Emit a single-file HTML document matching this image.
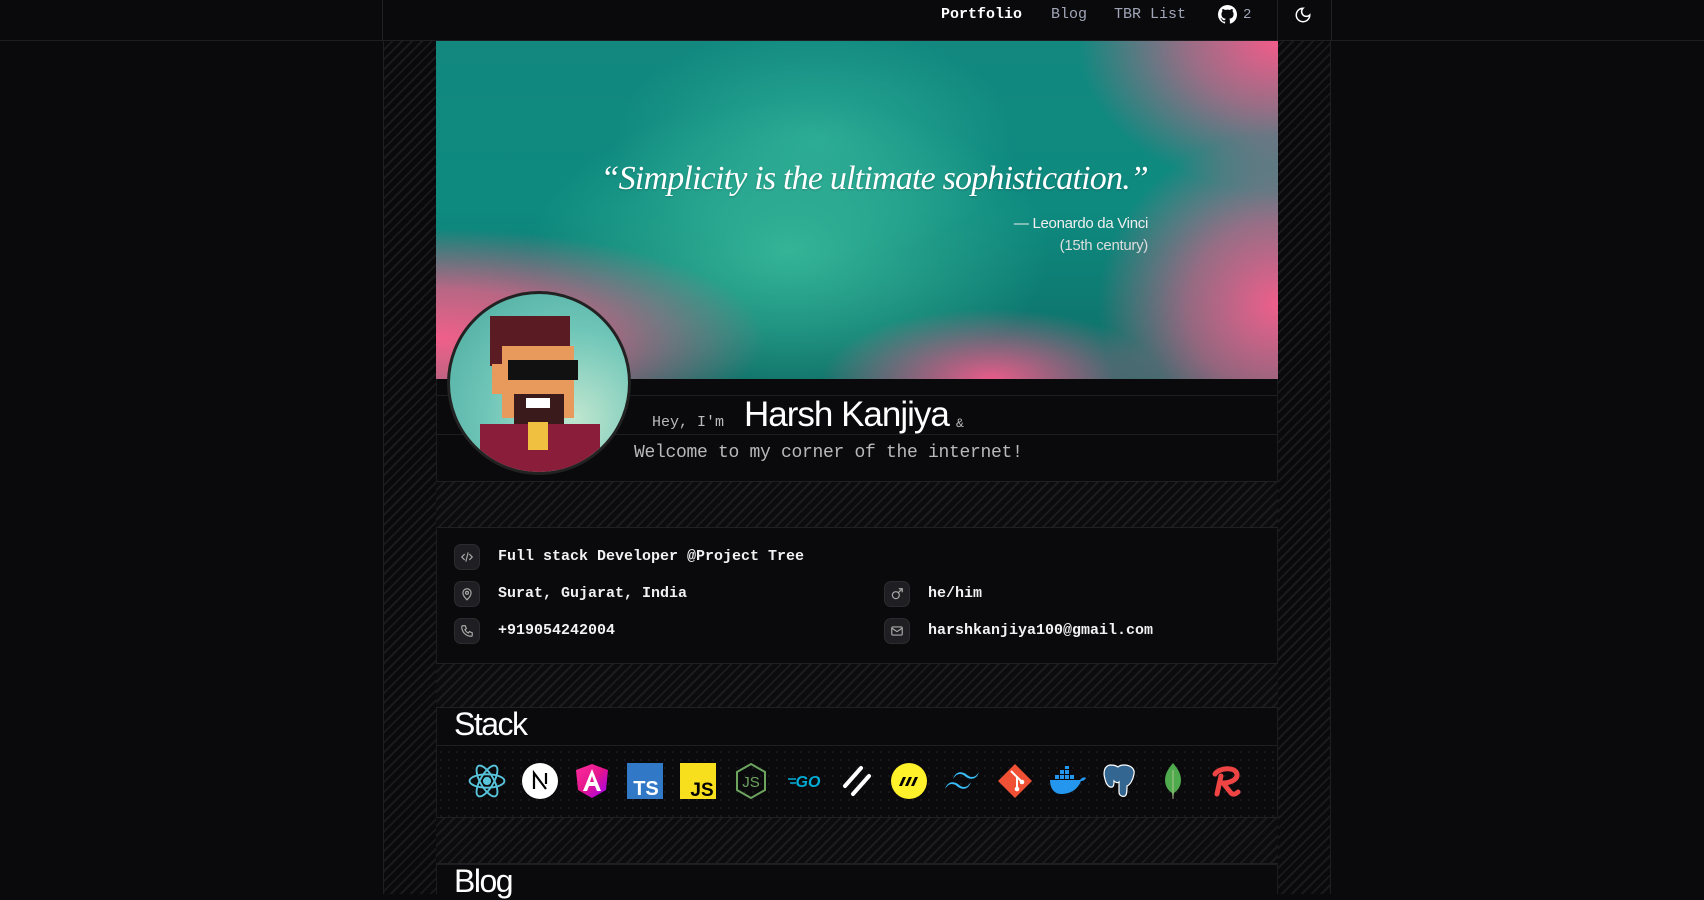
<!DOCTYPE html>
<html><head><meta charset="utf-8"><style>
*{margin:0;padding:0;box-sizing:border-box}
body{width:1704px;height:894px;overflow:hidden;background:#0a0a0c;font-family:"Liberation Mono",monospace;color:#e8e8e8;position:relative}
.nav{position:absolute;left:0;top:0;width:1704px;height:41px;border-bottom:1px solid #1e1e22}
.nav .edgeL{position:absolute;left:382px;top:0;height:41px;border-left:1px solid #222}
.nav .edgeR{position:absolute;left:1331px;top:0;height:41px;border-left:1px solid #222}
.nav span{position:absolute;top:6px;font-size:15px}
.col{position:absolute;left:383px;top:41px;width:948px;height:853px;border-left:1px solid #1e1e22;border-right:1px solid #1e1e22;background:repeating-linear-gradient(135deg,#0a0a0c 0 5px,#1a1a1d 5px 7px)}
.inner{position:absolute;left:436px;width:842px;background:#0a0a0c;border-left:1px solid #1c1c20;border-right:1px solid #1c1c20}
.hatch{position:absolute;left:436px;width:842px;background:repeating-linear-gradient(135deg,#0c0c0e 0 5px,#1c1c20 5px 7px);border-top:1px solid #202024;border-bottom:1px solid #202024}
.banner{position:absolute;left:436px;top:41px;width:842px;height:338px;overflow:hidden;background:
radial-gradient(ellipse 200px 150px at 100% 0%,#f25c8a 0%,rgba(242,92,138,0.6) 45%,rgba(242,92,138,0) 100%),
radial-gradient(ellipse 330px 110px at 0% 88%,#f0608a 0%,rgba(240,96,138,0.75) 45%,rgba(240,96,138,0) 100%),
radial-gradient(ellipse 180px 170px at 100% 78%,#ee5f8c 0%,rgba(238,95,140,0.6) 50%,rgba(238,95,140,0) 100%),
radial-gradient(ellipse 170px 70px at 66% 100%,#e85c8a 0%,rgba(232,92,138,0) 100%),
radial-gradient(ellipse 260px 150px at 42% 62%,#35b497 0%,rgba(53,180,151,0) 100%),
radial-gradient(ellipse 200px 120px at 45% 30%,#2aa994 0%,rgba(42,169,148,0) 100%),
linear-gradient(180deg,#12887f 0%,#0e8a7f 50%,#0e6d66 100%)}
.q{position:absolute;left:0;width:712px;text-align:right;font-family:"Liberation Serif",serif;font-style:italic;color:#fff}
.row{position:absolute;font-size:15px;color:#f2f2f2;font-weight:bold}
.ic{position:absolute;width:26px;height:26px;border-radius:7px;background:#1f1f23;border:1px solid #2c2c30;display:flex;align-items:center;justify-content:center}
.st{position:absolute;top:761px;width:40px;height:40px;display:flex;align-items:center;justify-content:center}
</style></head><body>
<div class="nav"><div class="edgeL"></div><div class="edgeR"></div>
<span style="left:941px;color:#fff;font-weight:bold">Portfolio</span>
<span style="left:1051px;color:#a0a6b8">Blog</span>
<span style="left:1114px;color:#a0a6b8">TBR List</span>
<svg style="position:absolute;left:1218px;top:5px" width="19" height="19" viewBox="0 0 16 16"><path fill="#fff" d="M8 0C3.580 0 0 3.58 0 8c0 3.54 2.29 6.53 5.47 7.59.4.07.55-.17.55-.38v-1.33c-2.230.48-2.7-1.07-2.7-1.07-.36-.92-.89-1.17-.89-1.17-.73-.5.05-.49.05-.49.8.06 1.23.83 1.23.83.72 1.23 1.87.87 2.33.67.07-.52.28-.87.5-1.07-1.78-.2-3.64-.89-3.64-3.95 0-.87.31-1.59.82-2.15-.08-.2-.36-1.02.08-2.12 0 0 .67-.21 2.2.82a7.6 7.6 0 014 0c1.53-1.04 2.2-.82 2.2-.82.44 1.1.16 1.92.08 2.12.51.56.82 1.27.82 2.15 0 3.07-1.87 3.75-3.65 3.95.29.25.54.73.54 1.48v2.2c0 .21.15.46.55.38A8 8 0 0016 8c0-4.42-3.58-8-8-8z"/></svg>
<span style="left:1243px;color:#a0a6b8;font-size:14px;top:7px">2</span>
<div style="position:absolute;left:1277px;top:0;height:41px;border-left:1px solid #222"></div>
<svg style="position:absolute;left:1294px;top:6px" width="18" height="18" viewBox="0 0 24 24" fill="none" stroke="#fff" stroke-width="2"><path d="M12 3a6 6 0 009 9 9 9 0 11-9-9z"/></svg>
</div>
<div class="col"></div>
<div class="banner">
<div class="q" style="top:119px;font-size:34px;letter-spacing:-0.8px;text-shadow:0 1px 2px rgba(0,0,0,.2)">“Simplicity is the ultimate sophistication.”</div>
<div class="q" style="top:174px;font-family:'Liberation Sans',sans-serif;font-style:normal;font-size:15px;color:#eee;letter-spacing:-0.3px">— Leonardo da Vinci</div>
<div class="q" style="top:196px;font-family:'Liberation Sans',sans-serif;font-style:normal;font-size:15px;color:#ddd;letter-spacing:-0.3px">(15th century)</div>
</div>
<div class="inner" style="top:379px;height:102px">
<div style="position:absolute;left:0;right:0;top:16px;border-top:1px solid #1e1e22"></div>
<div style="position:absolute;left:0;right:0;top:55px;border-top:1px solid #1e1e22"></div>
<div style="position:absolute;left:215px;top:35px;font-size:15px;color:#bbb">Hey, I'm</div>
<div style="position:absolute;left:307px;top:16px;font-family:'Liberation Sans',sans-serif;font-size:35px;color:#fff;letter-spacing:-1px">Harsh Kanjiya</div>
<div style="position:absolute;left:519px;top:37px;font-size:13px;color:#bbb">&amp;</div>
<div style="position:absolute;left:197px;top:64px;font-size:18px;color:#b8b8b8;letter-spacing:-0.3px">Welcome to my corner of the internet!</div>
</div>
<div style="position:absolute;left:447px;top:291px;width:184px;height:184px;border-radius:50%;border:3px solid #222;background:radial-gradient(circle at 70% 70%,#bfe6cf,#6fc6b8 50%,#4aa89e);overflow:hidden">
<div style="position:absolute;left:40px;top:22px;width:80px;height:50px;background:#5a1c22"></div>
<div style="position:absolute;left:52px;top:52px;width:72px;height:72px;background:#e8995c"></div>
<div style="position:absolute;left:42px;top:70px;width:14px;height:30px;background:#e8995c"></div>
<div style="position:absolute;left:58px;top:66px;width:70px;height:20px;background:#111"></div>
<div style="position:absolute;left:64px;top:100px;width:50px;height:30px;background:#3a1a1a"></div>
<div style="position:absolute;left:76px;top:104px;width:24px;height:10px;background:#fff"></div>
<div style="position:absolute;left:30px;top:130px;width:120px;height:60px;background:#8a1e3a"></div>
<div style="position:absolute;left:78px;top:128px;width:20px;height:28px;background:#f0c040"></div>
</div>
<div class="hatch" style="top:481px;height:47px"></div>
<div class="inner" style="top:528px;height:135px">
<div class="ic" style="left:17px;top:16px"><svg width="14" height="14" viewBox="0 0 24 24" fill="none" stroke="#aaa" stroke-width="2"><path d="M8 7l-5 5 5 5M16 7l5 5-5 5M14 4l-4 16"/></svg></div>
<div class="row" style="left:61px;top:20px">Full stack Developer @Project Tree</div>
<div class="ic" style="left:17px;top:53px"><svg width="14" height="14" viewBox="0 0 24 24" fill="none" stroke="#aaa" stroke-width="2"><path d="M12 22s7-7 7-12a7 7 0 00-14 0c0 5 7 12 7 12z"/><circle cx="12" cy="10" r="2.5"/></svg></div>
<div class="row" style="left:61px;top:57px">Surat, Gujarat, India</div>
<div class="ic" style="left:17px;top:90px"><svg width="14" height="14" viewBox="0 0 24 24" fill="none" stroke="#aaa" stroke-width="2"><path d="M5 3h4l2 5-2.5 1.5a11 11 0 006 6L16 13l5 2v4a2 2 0 01-2 2A16 16 0 013 5a2 2 0 012-2z"/></svg></div>
<div class="row" style="left:61px;top:94px">+919054242004</div>
<div class="ic" style="left:447px;top:53px"><svg width="14" height="14" viewBox="0 0 24 24" fill="none" stroke="#aaa" stroke-width="2"><circle cx="10" cy="14" r="6"/><path d="M14 10l7-7M15 3h6v6"/></svg></div>
<div class="row" style="left:491px;top:57px">he/him</div>
<div class="ic" style="left:447px;top:90px"><svg width="14" height="14" viewBox="0 0 24 24" fill="none" stroke="#aaa" stroke-width="2"><rect x="3" y="5" width="18" height="14" rx="2"/><path d="M3 7l9 6 9-6"/></svg></div>
<div class="row" style="left:491px;top:94px">harshkanjiya100@gmail.com</div>
</div>
<div class="hatch" style="top:663px;height:45px"></div>
<div class="inner" style="top:708px;height:109px;background-image:radial-gradient(#1c1c1f 1px,transparent 1px);background-size:8px 8px">
<div style="position:absolute;left:0;right:0;top:0;height:38px;background:#0a0a0c;border-bottom:1px solid #1e1e22"></div>
<div style="position:absolute;left:17px;top:-2px;font-family:'Liberation Sans',sans-serif;font-size:32px;color:#fff;letter-spacing:-1.5px">Stack</div>
</div>
<div class="st" style="left:467px"><svg width="38" height="36" viewBox="-12 -11 24 22" fill="none" stroke="#58c4dc" stroke-width="1.2"><circle r="2" fill="#58c4dc"/><ellipse rx="11" ry="4.2"/><ellipse rx="11" ry="4.2" transform="rotate(60)"/><ellipse rx="11" ry="4.2" transform="rotate(120)"/></svg></div>
<div class="st" style="left:520px"><svg width="36" height="36" viewBox="0 0 36 36"><circle cx="18" cy="18" r="18" fill="#fff"/><path d="M12 26V10l12 16M24 10v11" stroke="#000" stroke-width="2.2" fill="none"/></svg></div>
<div class="st" style="left:572px"><svg width="38" height="38" viewBox="0 0 38 38"><defs><linearGradient id="ag" x1="0" y1="0" x2="1" y2="1"><stop offset="0" stop-color="#ff2fa0"/><stop offset=".5" stop-color="#e4148c"/><stop offset="1" stop-color="#9d00ff"/></linearGradient></defs><path d="M19 2L3 8l2 20 14 8 14-8 2-20z" fill="url(#ag)"/><path d="M19 7l-9 22h4l2-5h6l2 5h4zm-2 13l2-6 2 6z" fill="#fff"/></svg></div>
<div class="st" style="left:625px"><svg width="36" height="36" viewBox="0 0 36 36"><rect width="36" height="36" fill="#3178c6"/><text x="19" y="32" font-family="Liberation Sans" font-weight="bold" font-size="20" fill="#fff" text-anchor="middle">TS</text></svg></div>
<div class="st" style="left:678px"><svg width="36" height="36" viewBox="0 0 36 36"><rect width="36" height="36" fill="#f7df1e"/><text x="22" y="33" font-family="Liberation Sans" font-weight="bold" font-size="19" fill="#000" text-anchor="middle">JS</text></svg></div>
<div class="st" style="left:731px"><svg width="34" height="38" viewBox="0 0 34 38" fill="none" stroke="#6da55f" stroke-width="2"><path d="M17 2l14 8v18l-14 8-14-8V10z"/><text x="17" y="25" font-family="Liberation Sans" font-size="15" fill="#6da55f" stroke="none" text-anchor="middle">JS</text></svg></div>
<div class="st" style="left:784px"><svg width="36" height="20" viewBox="0 0 36 20"><text x="22" y="16" font-family="Liberation Sans" font-weight="bold" font-style="italic" font-size="16" fill="#00add8" text-anchor="middle">GO</text><path d="M2 8h8M4 12h6" stroke="#00add8" stroke-width="1.5"/></svg></div>
<div class="st" style="left:836px"><svg width="34" height="34" viewBox="0 0 34 34" stroke="#fff" stroke-width="4" stroke-linecap="round"><path d="M6 22L22 4M14 30L30 12"/></svg></div>
<div class="st" style="left:889px"><svg width="38" height="38" viewBox="0 0 38 38"><circle cx="19" cy="19" r="18" fill="#fff12a"/><path d="M9 24l4-9h3l-4 9zm6 0l4-9h3l-4 9zm6 0l4-9h3l-4 9z" fill="#000"/></svg></div>
<div class="st" style="left:942px"><svg width="38" height="24" viewBox="0 0 38 24" fill="#38bdf8"><path d="M10 10c2-6 6-8 11-6 3 1 4 4 8 4 3 0 5-2 7-5-2 6-6 8-11 6-3-1-4-4-8-4-3 0-5 2-7 5zM2 20c2-6 6-8 11-6 3 1 4 4 8 4 3 0 5-2 7-5-2 6-6 8-11 6-3-1-4-4-8-4-3 0-5 2-7 5z"/></svg></div>
<div class="st" style="left:995px"><svg width="36" height="36" viewBox="0 0 36 36"><path d="M18 1l17 17-17 17L1 18z" fill="#f05033"/><path d="M14 8l6 6v12M20 14l5 5" stroke="#fff" stroke-width="2" fill="none"/><circle cx="20" cy="26" r="2.3" fill="#fff"/><circle cx="25" cy="19" r="2.3" fill="#fff"/></svg></div>
<div class="st" style="left:1048px"><svg width="38" height="30" viewBox="0 0 38 30" fill="#2496ed"><path d="M1 14h30c2-3 5-3 6-2-1 2-3 3-5 3-3 8-10 13-20 13C5 28 1 22 1 14z"/><rect x="6" y="9" width="4" height="4"/><rect x="11" y="9" width="4" height="4"/><rect x="16" y="9" width="4" height="4"/><rect x="21" y="9" width="4" height="4"/><rect x="11" y="4" width="4" height="4"/><rect x="16" y="4" width="4" height="4"/><rect x="16" y="0" width="4" height="3"/></svg></div>
<div class="st" style="left:1100px"><svg width="36" height="38" viewBox="0 0 36 38" fill="none" stroke="#fff" stroke-width="1.2"><path d="M8 3c-6 1-7 8-5 14 1 5 4 9 7 8 2 0 2-4 2-6 2 2 4 2 5 1v10c0 4 4 5 6 4s2-6 2-10c3-1 6-6 7-12 1-5-3-9-10-9-3 0-5 1-6 2-3-2-5-2-8-2z" fill="#336791"/></svg></div>
<div class="st" style="left:1153px"><svg width="20" height="38" viewBox="0 0 20 38"><path d="M10 1c4 5 8 10 8 17 0 7-4 11-7 13l-1 6-1-6c-3-2-7-6-7-13 0-7 4-12 8-17z" fill="#4fa94d"/><path d="M10 8v29" stroke="#c9c9a0" stroke-width="0.8"/></svg></div>
<div class="st" style="left:1206px"><svg width="34" height="34" viewBox="0 0 34 34" fill="none" stroke="#ef4444" stroke-width="5" stroke-linecap="round" stroke-linejoin="round"><path d="M6 10c4-6 20-8 22 0 1 6-8 9-14 9M12 12L8 30M14 19l8 10c2 2 5 1 7-1"/></svg></div>
<div class="hatch" style="top:817px;height:47px"></div>
<div class="inner" style="top:864px;height:30px;border-top:1px solid #1e1e22">
<div style="position:absolute;left:17px;top:-2px;font-family:'Liberation Sans',sans-serif;font-size:32px;color:#fff;letter-spacing:-1.5px">Blog</div>
</div>
</body></html>
